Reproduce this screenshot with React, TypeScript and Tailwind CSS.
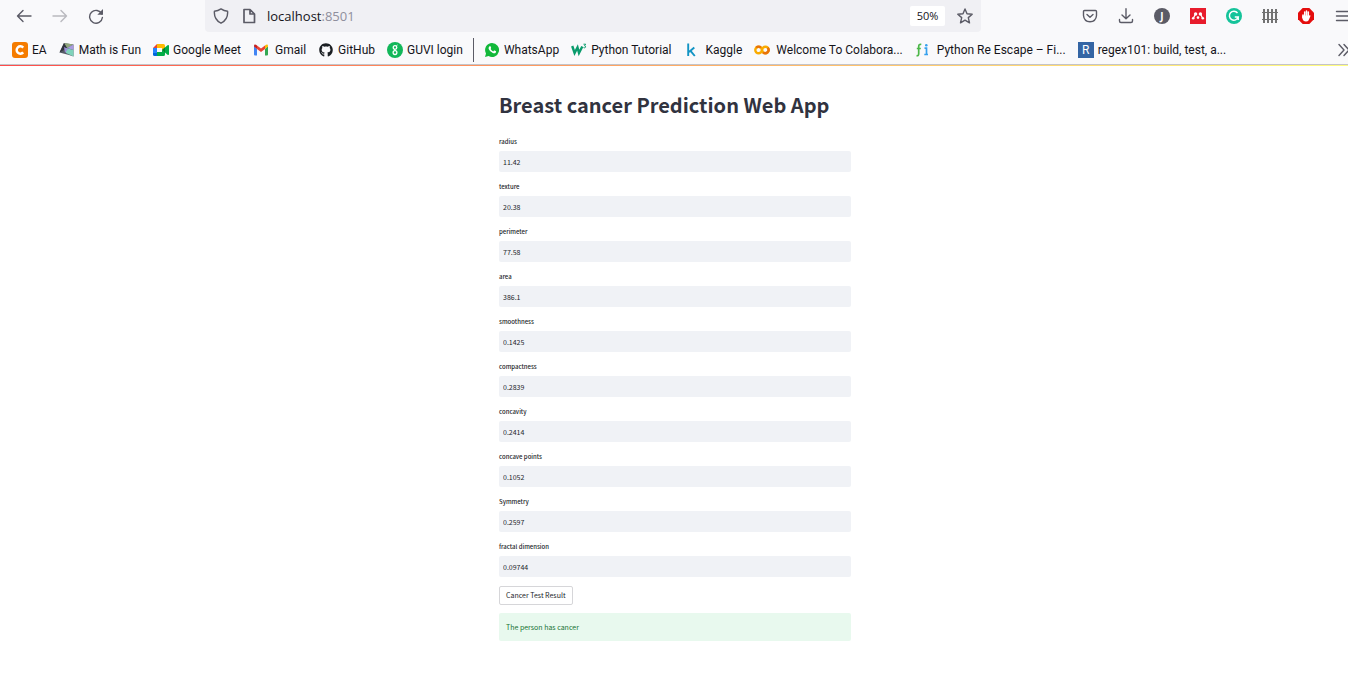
import type { ReactNode } from "react";
import { FaGithub } from "react-icons/fa";

const line = {
  fill: "none",
  stroke: "#5b5b66",
  strokeWidth: 1.4,
  strokeLinecap: "round" as const,
  strokeLinejoin: "round" as const,
};

function Icon({ children }: { children: ReactNode }) {
  return (
    <svg viewBox="0 0 16 16" className="block size-4 shrink-0" aria-hidden="true">
      {children}
    </svg>
  );
}

function ToolButton({ label, children, disabled }: { label: string; children: ReactNode; disabled?: boolean }) {
  return (
    <button type="button" aria-label={label} disabled={disabled} className="size-4 shrink-0 disabled:opacity-40">
      {children}
    </button>
  );
}

const bookmarks: { name: string; icon: ReactNode; wide?: boolean }[] = [
  {
    name: "EA",
    icon: (
      <Icon>
        <rect width="16" height="16" rx="3" fill="#f57c00" />
        <path d="M11.2 5.6A3.7 3.7 0 1 0 11.2 10.4" fill="none" stroke="#fff" strokeWidth="2.5" />
      </Icon>
    ),
  },
  {
    name: "Math is Fun",
    icon: (
      <Icon>
        <path d="M5 1 14.500 2.500 14.500 14.500 10 13 .5 10.500z" fill="#555a66" />
        <path d="M5 1 14.500 2.500 8 6z" fill="#8fa67c" />
        <path d="M5 1 8 6 .5 10.500z" fill="#30343c" />
        <path d="M8 6 14.500 2.500 14.500 8z" fill="#a99be0" />
        <path d="M7 6 14.500 8 14.500 14.500 7 11z" fill="#7fd3bb" />
        <path d="M5 5 9 7 6 11z" fill="#9a8cd6" />
      </Icon>
    ),
  },
  {
    name: "Google Meet",
    icon: (
      <Icon>
        <path d="M4 2v4H0z" fill="#ea4335" />
        <path d="M0 6h4v5H0z" fill="#2684fc" />
        <path d="M0 11h4v3H1.5Q0 14 0 12.500z" fill="#0066da" />
        <path d="M4 2h6.500Q12 2 12 3.500V7L9 8V6H4z" fill="#ffba00" />
        <path d="M4 10h5V8l3 2v2.500Q12 14 10.500 14H4z" fill="#00ac47" />
        <path d="M9 8 14.500 3.200Q16 2.500 16 4v8Q16 13.500 14.500 12.800z" fill="#00ac47" />
        <path d="M9 8 12 5.400v5.200z" fill="#00832d" />
      </Icon>
    ),
  },
  {
    name: "Gmail",
    wide: true,
    icon: (
      <Icon>
        <path d="M1 4v8.500q0 1 1 1h2V7z" fill="#4285f4" />
        <path d="M12 7v6.500h2q1 0 1-1V4z" fill="#34a853" />
        <path d="M1 4.500V4q0-2 2-1.200L4 3.500V7z" fill="#c5221f" />
        <path d="M15 4.500V4q0-2-2-1.200L12 3.500V7z" fill="#fbbc04" />
        <path d="M4 3.500 8 6.600 12 3.500V7L8 10 4 7z" fill="#ea4335" />
      </Icon>
    ),
  },
  { name: "GitHub", icon: <FaGithub className="size-4 shrink-0 p-px text-[#1b1f23]" /> },
  {
    name: "GUVI login",
    icon: (
      <Icon>
        <circle cx="8" cy="8" r="8" fill="#12b75a" />
        <circle cx="8" cy="5.500" r="1.800" fill="none" stroke="#fff" strokeWidth="1.300" />
        <circle cx="8" cy="10.600" r="1.900" fill="none" stroke="#fff" strokeWidth="1.300" />
        <path d="M9.300 4.200 10.500 3M6.800 7.200 8.500 8.500" stroke="#fff" strokeWidth="1" />
      </Icon>
    ),
  },
  {
    name: "WhatsApp",
    icon: (
      <Icon>
        <path d="M8 1a7 7 0 1 1-3.400 13.100L1 15l1-3.500A7 7 0 0 1 8 1z" fill="#12b83a" />
        <path
          d="M5.300 4.400Q6.200 3.600 6.600 4.600L7.100 5.800Q7.200 6.200 6.600 6.900 7.600 8.700 9.300 9.400L10 8.600Q10.300 8.300 10.700 8.500L12 9.200Q12.300 9.500 11.800 10.500 10.800 11.900 8.800 11 5.800 9.700 4.700 7 4.200 5.400 5.300 4.400z"
          fill="#fff"
        />
      </Icon>
    ),
  },
  {
    name: "Python Tutorial",
    icon: (
      <Icon>
        <path d="M1.200 4 3.600 11 6.500 5.500 8 11 11.300 4.500" fill="none" stroke="#0a9b6c" strokeWidth="2.400" />
        <path d="M12.500 2.200h2.200L13.500 3.800q1.500.2 1.100 1.400-.6 1-2.100.4" fill="none" stroke="#0a9b6c" strokeWidth="1" />
      </Icon>
    ),
  },
  {
    name: "Kaggle",
    wide: true,
    icon: (
      <Icon>
        <path d="M4.200 1.500V14M10.300 5.500 5 10M6.500 8.800 10.800 14" fill="none" stroke="#1394c4" strokeWidth="1.900" />
      </Icon>
    ),
  },
  {
    name: "Welcome To Colabora...",
    wide: true,
    icon: (
      <Icon>
        <circle cx="4.600" cy="8" r="3.300" fill="none" stroke="#f9ab00" strokeWidth="2.400" />
        <circle cx="11.400" cy="8" r="3.300" fill="none" stroke="#f9ab00" strokeWidth="2.400" />
        <path d="M9.100 10.400A3.300 3.300 0 0 0 13.700 5.700M2.300 5.700A3.300 3.300 0 0 1 6.900 5.700" fill="none" stroke="#e8710a" strokeWidth="2.400" />
      </Icon>
    ),
  },
  {
    name: "Python Re Escape – Fi...",
    wide: true,
    icon: (
      <Icon>
        <path d="M6.300 2.500Q3.700 1.800 3.700 4.500V11.500Q3.700 14 1.500 13.700M1.800 6.500H5.800" fill="none" stroke="#4cb748" strokeWidth="1.700" />
        <path d="M9.500 6.200H11.500V12.500M9.300 12.500H13" fill="none" stroke="#36a1ee" strokeWidth="1.700" />
        <circle cx="11.300" cy="3.200" r="1.300" fill="#36a1ee" />
      </Icon>
    ),
  },
  {
    name: "regex101: build, test, a...",
    icon: <span className="flex size-4 shrink-0 items-center justify-center bg-[#3465a4] text-xs text-white">R</span>,
  },
];

const fields = [
  ["radius", "11.42"],
  ["texture", "20.38"],
  ["perimeter", "77.58"],
  ["area", "386.1"],
  ["smoothness", "0.1425"],
  ["compactness", "0.2839"],
  ["concavity", "0.2414"],
  ["concave points", "0.1052"],
  ["Symmetry", "0.2597"],
  ["fractal dimension", "0.09744"],
];

function Toolbar() {
  return (
    <div className="flex h-8 items-center">
      <div className="flex w-[205px] shrink-0 gap-5 pl-4">
        <ToolButton label="Back">
          <Icon>
            <path {...line} d="M15 8H1.500M7 2.500 1.500 8 7 13.500" />
          </Icon>
        </ToolButton>
        <ToolButton label="Forward" disabled>
          <Icon>
            <path {...line} d="M1 8H14.500M9 2.500 14.500 8 9 13.500" />
          </Icon>
        </ToolButton>
        <ToolButton label="Reload">
          <Icon>
            <path {...line} d="M13.800 6A6.400 6.400 0 1 0 14.400 9.500" />
            <path d="M15 1V6.700H9.300z" fill="#5b5b66" />
          </Icon>
        </ToolButton>
      </div>
      <div className="flex h-8 min-w-0 flex-1 items-center rounded-b bg-[#f0f0f4] px-2">
        <div className="flex gap-3">
          <Icon>
            <path {...line} d="M8 .9Q11 3 14.600 3.200 15.300 11.500 8 15.200.7 11.500 1.400 3.200 5 3 8 .9z" />
          </Icon>
          <Icon>
            <path {...line} strokeWidth="1.700" d="M3 1.500H9L13.500 6V14.500H3zM9 1.500V6H13.500" />
          </Icon>
        </div>
        <div className="ml-2.5 flex-1 pt-px text-[13px] text-[#15141a]">
          localhost<span className="text-[#8f8f9d]">:8501</span>
        </div>
        <button type="button" className="mr-3 h-5 w-[35px] rounded-xs bg-white text-[11px] text-[#15141a]">
          50%
        </button>
        <ToolButton label="Bookmark this page">
          <Icon>
            <path {...line} d="M8 1 10 5.700 15.200 6.200 11.300 9.600 12.500 14.800 8 12.100 3.500 14.800 4.700 9.600.8 6.200 6 5.700z" />
          </Icon>
        </ToolButton>
      </div>
      <div className="flex w-[367px] shrink-0 gap-5 overflow-hidden pl-[101px]">
        <ToolButton label="Save to Pocket">
          <Icon>
            <path {...line} d="M2.500 2.500H13.500Q14.500 2.500 14.500 3.500V7.500Q14 13.500 8 13.800 2 13.500 1.500 7.500V3.500Q1.500 2.500 2.500 2.500zM5 6.500 8 9.300 11 6.500" />
          </Icon>
        </ToolButton>
        <ToolButton label="Downloads">
          <Icon>
            <path {...line} d="M8 .8V10.500M4 7 8 10.800 12 7M1.500 11.500V13Q1.500 14.500 3 14.500H13Q14.500 14.500 14.500 13V11.500" />
          </Icon>
        </ToolButton>
        <ToolButton label="Account">
          <span className="flex size-4 items-center justify-center rounded-full bg-[#5b5b66] text-[10px] font-bold text-white">J</span>
        </ToolButton>
        <ToolButton label="Mendeley">
          <Icon>
            <rect width="16" height="16" fill="#e81c2c" />
            <circle cx="5.600" cy="6" r="1.700" fill="#fff" />
            <circle cx="10.400" cy="6" r="1.700" fill="#fff" />
            <circle cx="3.200" cy="10.300" r="1.300" fill="#fff" />
            <circle cx="8" cy="9.600" r="1.300" fill="#fff" />
            <circle cx="12.800" cy="10.300" r="1.300" fill="#fff" />
            <path d="M3.600 9.800 5 7M11 7 12.400 9.800" stroke="#fff" strokeWidth="1.300" />
          </Icon>
        </ToolButton>
        <ToolButton label="Grammarly">
          <Icon>
            <circle cx="8" cy="8" r="8" fill="#15c39a" />
            <path d="M11.500 5A4.500 4.500 0 1 0 12.200 9H8.800M12.200 8.500V12" fill="none" stroke="#fff" strokeWidth="1.500" />
          </Icon>
        </ToolButton>
        <ToolButton label="Fence">
          <Icon>
            <path d="M2 1V15M6 1V15M10 1V15M14 1V15" stroke="#737373" strokeWidth="2" />
            <path d="M0 4.500H16M0 11.500H16" stroke="#737373" strokeWidth="1" />
          </Icon>
        </ToolButton>
        <ToolButton label="Ad blocker">
          <Icon>
            <path d="M4.700 0H11.300L16 4.700V11.300L11.300 16H4.700L0 11.300V4.700z" fill="#e40d0d" />
            <path d="M5 7V9.500M6.700 4V9M8.500 3V9M10.300 4V9" stroke="#fff" strokeWidth="1.500" strokeLinecap="round" />
            <path d="M4.300 7.500H11L12 7.200Q12.700 7.200 12.300 8.500L10.500 12.500Q9.800 13.500 8 13.500 5 13.500 4.300 10z" fill="#fff" />
          </Icon>
        </ToolButton>
        <ToolButton label="Menu">
          <Icon>
            <path {...line} d="M2.500 3.500H16M2.500 8H16M2.500 12.500H16" />
          </Icon>
        </ToolButton>
      </div>
    </div>
  );
}

function BookmarkBar() {
  return (
    <nav
      aria-label="Bookmarks"
      className="flex h-[33px] items-center overflow-hidden border-b border-[#c4c4c8] pt-1 pl-3 font-['Roboto',sans-serif] text-xs text-[#15141a]"
    >
      <ul className="flex min-w-0 flex-1 items-center gap-3">
        {bookmarks.map(({ name, icon, wide }) => (
          <li key={name} className={name === "WhatsApp" ? "-ml-0.5 flex h-6 shrink-0 items-center border-l border-[#5b5b66] pl-2.5" : "shrink-0"}>
            <a href="#" className={wide ? "flex items-center gap-1.5 whitespace-nowrap" : "flex items-center gap-1 whitespace-nowrap"}>
              {icon}
              {name}
            </a>
          </li>
        ))}
      </ul>
      <button type="button" aria-label="More bookmarks" className="w-3 shrink-0 overflow-hidden">
        <Icon>
          <path {...line} d="M3 2.500 8 8 3 13.500M8 2.500 13 8 8 13.500" />
        </Icon>
      </button>
    </nav>
  );
}

export default function App() {
  return (
    <div className="min-h-screen bg-white font-['Open_Sans',sans-serif]">
      <header className="bg-[#f9f9fb]">
        <Toolbar />
        <BookmarkBar />
      </header>
      <div className="h-px bg-linear-to-r from-[#ff4b4b] to-[#fffd80]" />
      <main className="pb-8 pl-0.5 font-['Noto_Sans_CJK_SC',sans-serif] text-[#31333f]">
        <div className="mx-auto max-w-[352px]">
          <h1 className="pt-[23px] text-xl leading-8 font-bold">Breast cancer Prediction Web App</h1>
          <form className="mt-[15px] text-[#1c1e2a]" onSubmit={(e) => e.preventDefault()}>
            <div className="flex flex-col gap-[9px]">
              {fields.map(([label, value]) => (
                <div key={label} className="flex flex-col gap-[3px]">
                  <label htmlFor={label} className="text-[6px] leading-3 font-medium">
                    {label}
                  </label>
                  <input id={label} defaultValue={value} className="h-[21px] w-full rounded-xs bg-[#f0f2f6] px-1 text-[7px] outline-none" />
                </div>
              ))}
            </div>
            <button type="submit" className="mt-[9px] flex h-[19px] items-center rounded-xs border border-[#d6d6d9] bg-white px-1.5 text-[7px]">
              Cancer Test Result
            </button>
          </form>
          <div role="status" className="mt-2 flex h-7 items-center rounded-xs bg-[#e8f9ee] px-[7px] text-[7px] text-[#177233]">
            The person has cancer
          </div>
        </div>
      </main>
    </div>
  );
}
